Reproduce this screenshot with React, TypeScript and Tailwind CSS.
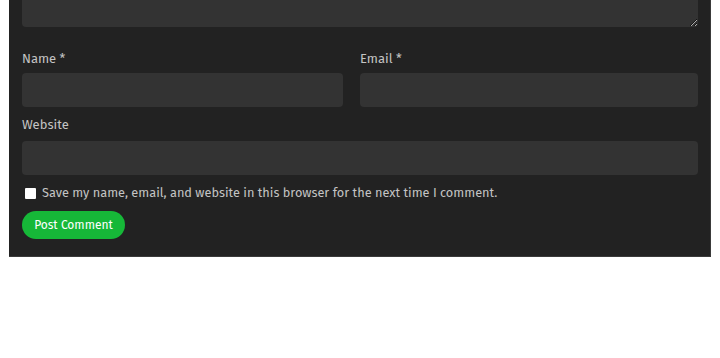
export default function App() {
    return (
        <div className="min-h-[358px] bg-white pl-[9px] pr-[9px]" style={{ fontFamily: '"Fira Sans", "Noto Sans", sans-serif' }}>
            <div className="bg-[#222222] pl-[13px] pr-[12px] pb-[17px] border-r border-b border-[#3a3a3a]">
                {/* comment textarea, scrolled partly out of view */}
                <textarea className="block w-full h-[27px] bg-[#333333] rounded-b-[4px] resize-y outline-none" />

                <div className="mt-[22px] flex gap-[17px]">
                    <div className="w-[321px]">
                        <label className="block text-[13px] leading-[20px] text-[#c4c4c4]">Name *</label>
                        <input className="mt-[4px] block w-full h-[34px] rounded-[4px] bg-[#333333] outline-none" />
                    </div>
                    <div className="flex-1">
                        <label className="block text-[13px] leading-[20px] text-[#c4c4c4]">Email *</label>
                        <input className="mt-[4px] block w-full h-[34px] rounded-[4px] bg-[#333333] outline-none" />
                    </div>
                </div>

                <label className="mt-[8px] block text-[13px] leading-[20px] text-[#c4c4c4]">Website</label>
                <input className="mt-[6px] block w-full h-[34px] rounded-[4px] bg-[#333333] outline-none" />

                <div className="mt-[8px] flex items-center gap-[6px] pl-[3px] h-[20px]">
                    <input type="checkbox" className="w-[11px] h-[11px] appearance-none bg-white rounded-[1px]" />
                    <span className="text-[12.75px] leading-[20px] text-[#c4c4c4]">
                        Save my name, email, and website in this browser for the next time I comment.
                    </span>
                </div>

                <button className="mt-[8px] h-[28px] w-[103px] rounded-full bg-[#16b838] text-white text-[12px] font-normal">
                    Post Comment
                </button>
            </div>
        </div>
    );
}
